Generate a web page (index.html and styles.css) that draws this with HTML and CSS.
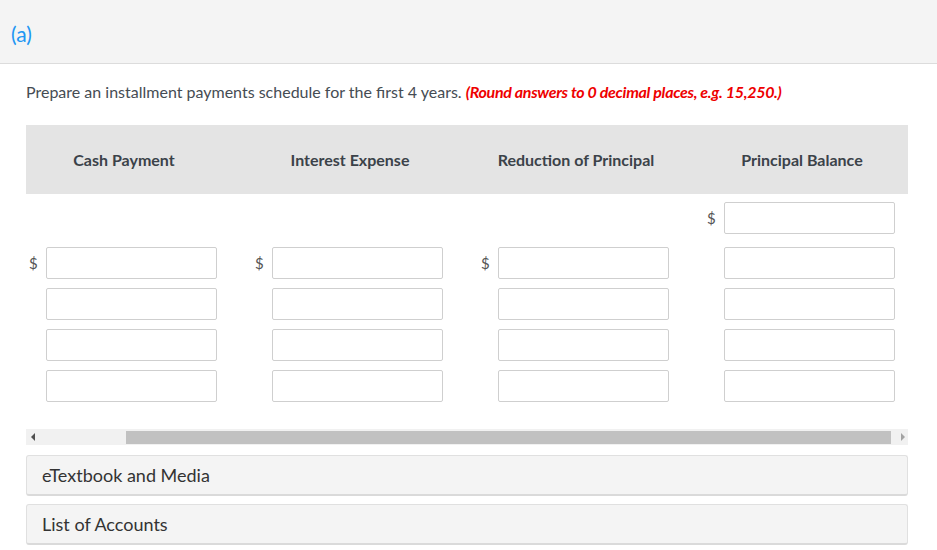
FILE: index.html
```html
<!DOCTYPE html>
<html>
<head>
<meta charset="utf-8">
<link rel="stylesheet" href="styles.css">
</head>
<body>
<div class="part-header"><span class="part-label">(a)</span></div>
<div class="question">
  <p class="instruction">Prepare an installment payments schedule for the first 4 years. <span class="hint">(Round answers to 0 decimal places, e.g. 15,250.)</span></p>
  <div class="table-wrap">
    <div class="thead">
      <div class="th">Cash Payment</div>
      <div class="th">Interest Expense</div>
      <div class="th">Reduction of Principal</div>
      <div class="th">Principal Balance</div>
    </div>
    <div class="tbody">
      <div class="row row-first">
        <div class="cell"></div>
        <div class="cell"></div>
        <div class="cell"></div>
        <div class="cell"><span class="cur">$</span><input class="inp" type="text"></div>
      </div>
      <div class="row">
        <div class="cell"><span class="cur">$</span><input class="inp" type="text"></div>
        <div class="cell"><span class="cur">$</span><input class="inp" type="text"></div>
        <div class="cell"><span class="cur">$</span><input class="inp" type="text"></div>
        <div class="cell"><span class="cur"></span><input class="inp" type="text"></div>
      </div>
      <div class="row">
        <div class="cell"><span class="cur"></span><input class="inp" type="text"></div>
        <div class="cell"><span class="cur"></span><input class="inp" type="text"></div>
        <div class="cell"><span class="cur"></span><input class="inp" type="text"></div>
        <div class="cell"><span class="cur"></span><input class="inp" type="text"></div>
      </div>
      <div class="row">
        <div class="cell"><span class="cur"></span><input class="inp" type="text"></div>
        <div class="cell"><span class="cur"></span><input class="inp" type="text"></div>
        <div class="cell"><span class="cur"></span><input class="inp" type="text"></div>
        <div class="cell"><span class="cur"></span><input class="inp" type="text"></div>
      </div>
      <div class="row">
        <div class="cell"><span class="cur"></span><input class="inp" type="text"></div>
        <div class="cell"><span class="cur"></span><input class="inp" type="text"></div>
        <div class="cell"><span class="cur"></span><input class="inp" type="text"></div>
        <div class="cell"><span class="cur"></span><input class="inp" type="text"></div>
      </div>
    </div>
  </div>
  <div class="scrollbar">
    <span class="arrow arrow-left"></span>
    <div class="track"><div class="thumb"></div></div>
    <span class="arrow arrow-right"></span>
  </div>
  <div class="panel">eTextbook and Media</div>
  <div class="panel">List of Accounts</div>
</div>
</body>
</html>
```

FILE: styles.css
```css
html, body {
  margin: 0;
  padding: 0;
  background: #fff;
  font-family: Lato, "Open Sans", sans-serif;
}

.part-header {
  height: 63px;
  background: #f4f4f4;
  border-bottom: 1px solid #dcdcdc;
  padding-left: 11px;
  display: flex;
  align-items: center;
}

.part-label {
  font-size: 21px;
  color: #2196f3;
  margin-top: 3px;
}

.question {
  padding: 0 29px 0 26px;
}

.instruction {
  margin: 18px 0 0 0;
  font-size: 16px;
  line-height: 20px;
  color: #454c53;
}

.hint {
  color: #ee0000;
  font-weight: bold;
  font-style: italic;
  letter-spacing: -0.3px;
}

.table-wrap {
  margin-top: 23px;
  width: 882px;
  overflow: hidden;
}

.thead {
  display: grid;
  grid-template-columns: repeat(4, 226px);
  height: 69px;
  background: #e4e4e4;
  align-items: center;
}

.th {
  text-align: center;
  padding-right: 30px;
  font-size: 16px;
  font-weight: bold;
  color: #3b4249;
}

.tbody {
  padding-top: 8px;
}

.row {
  display: grid;
  grid-template-columns: repeat(4, 226px);
  height: 32px;
  margin-bottom: 9px;
}

.row-first {
  margin-bottom: 13px;
}

.cell {
  display: flex;
  align-items: center;
}

.cur {
  width: 20px;
  padding-left: 3px;
  box-sizing: border-box;
  font-size: 15px;
  color: #555;
}

.inp {
  width: 171px;
  height: 32px;
  box-sizing: border-box;
  border: 1px solid #cfcfcf;
  border-radius: 2px;
  margin: 0;
  padding: 0 6px;
  background: #fff;
}

.scrollbar {
  margin-top: 18px;
  width: 882px;
  height: 16px;
  background: #f1f1f1;
  display: flex;
  align-items: center;
}

.arrow {
  width: 12px;
  height: 16px;
  display: flex;
  align-items: center;
  justify-content: center;
}

.arrow-left::before {
  content: "";
  border-top: 4px solid transparent;
  border-bottom: 4px solid transparent;
  border-right: 4px solid #505050;
  margin-left: 2px;
}

.arrow-right::before {
  content: "";
  border-top: 4px solid transparent;
  border-bottom: 4px solid transparent;
  border-left: 4px solid #a3a3a3;
  margin-left: 2px;
}

.track {
  flex: 1;
  height: 13px;
  display: flex;
}

.thumb {
  margin-left: 88px;
  width: 765px;
  height: 13px;
  background: #c1c1c1;
}

.panel {
  width: 882px;
  box-sizing: border-box;
  height: 41px;
  margin-top: 10px;
  background: #f4f4f4;
  border: 1px solid #e0e0e0;
  border-bottom: 2px solid #dadada;
  border-radius: 3px;
  padding-left: 15px;
  display: flex;
  align-items: center;
  font-size: 18px;
  color: #333;
}

.panel + .panel {
  margin-top: 8px;
}
```
